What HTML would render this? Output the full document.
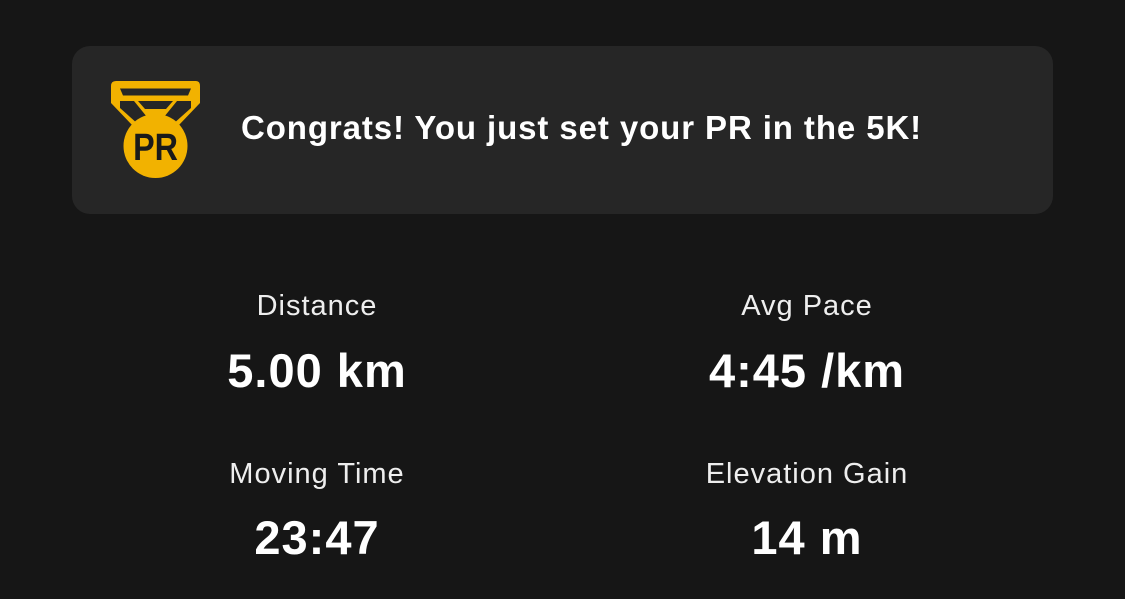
<html><head><style>
body{margin:0;background:#161616;width:1125px;height:599px;overflow:hidden;font-family:"Liberation Sans",sans-serif;color:#fff}
.card{position:absolute;left:72px;top:46px;width:981px;height:168px;background:#262626;border-radius:18px}
.msg{position:absolute;left:241px;top:109px;font-size:33px;font-weight:bold;white-space:nowrap;letter-spacing:0.9px}
.s{position:absolute;width:400px;text-align:center}
.l{font-size:29px;color:#eee;letter-spacing:1px}
.v{font-size:47px;font-weight:bold;letter-spacing:1px}
</style></head><body>
<div class="card"></div>
<svg style="position:absolute;left:0;top:0" width="300" height="200">
<path d="M116,81 L196,81 Q200,81 200,86 L200,103 L178,126 L133,126 L111,103 L111,86 Q111,81 116,81Z" fill="#f2b200"/>
<path d="M120,88.5 L191,88.5 L188,95.5 L123,95.5Z" fill="#262626"/>
<path d="M120,101 L134,101 L147,117 L139,125 L120,108Z" fill="#262626"/>
<path d="M191,101 L177,101 L164,117 L172,125 L191,108Z" fill="#262626"/>
<path d="M138,101 L173,101 L166,109 L145,109Z" fill="#262626"/>
<circle cx="155.5" cy="146" r="32" fill="#f2b200"/>
<text x="155.5" y="160" text-anchor="middle" font-family="Liberation Sans" font-weight="bold" font-size="38" fill="#1a1a1a" transform="translate(155.5 0) scale(0.85 1) translate(-155.5 0)">PR</text>
</svg>
<div class="msg">Congrats! You just set your PR in the 5K!</div>
<div class="s l" style="left:117px;top:290px">Distance</div>
<div class="s v" style="left:117px;top:343px">5.00 km</div>
<div class="s l" style="left:607px;top:290px">Avg Pace</div>
<div class="s v" style="left:607px;top:343px">4:45 /km</div>
<div class="s l" style="left:117px;top:458px">Moving Time</div>
<div class="s v" style="left:117px;top:510px">23:47</div>
<div class="s l" style="left:607px;top:458px">Elevation Gain</div>
<div class="s v" style="left:607px;top:510px">14 m</div>
</body></html>
